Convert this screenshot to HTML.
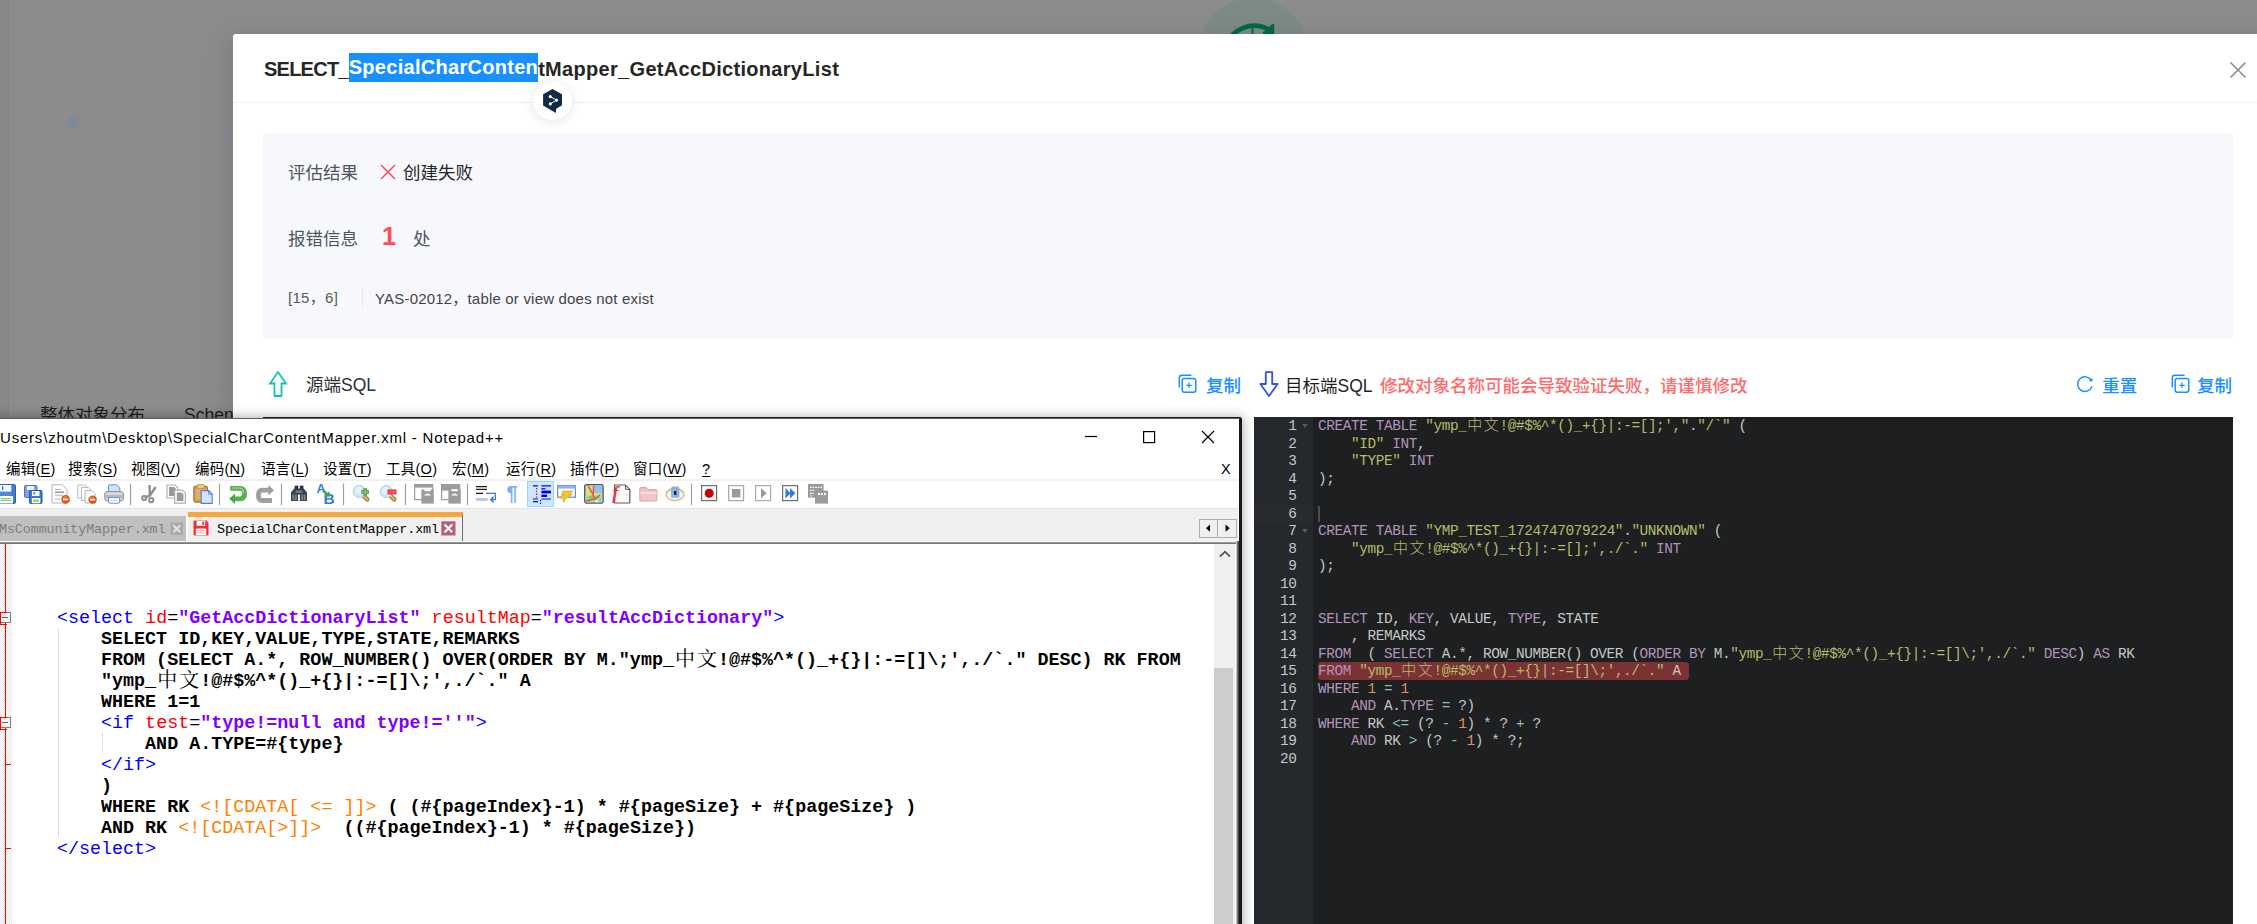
<!DOCTYPE html>
<html lang="zh-CN">
<head>
<meta charset="utf-8">
<title>SELECT_SpecialCharContentMapper_GetAccDictionaryList</title>
<style>
*{box-sizing:border-box;margin:0;padding:0}
html,body{width:2257px;height:924px;overflow:hidden}
body{background:#8c8c8c;font-family:"Liberation Sans","Noto Sans CJK SC",sans-serif;color:#262626;position:relative}
.abs{position:absolute}
.t{position:absolute;white-space:nowrap;line-height:1}
/* ---------- dimmed page behind ---------- */
#bgstrip{left:0;top:0;width:9.4px;height:418px;background:#86888a;border-right:1px solid #808284}
#bgbox{left:39px;top:-2px;width:300px;height:388px;border:1px solid #848a90;border-right:0}
.dot{position:absolute;border-radius:50%}
#gcircle{left:1198.5px;top:-1.7px;width:108.6px;height:108.6px;border-radius:50%;background:#7c8b84}
#bgtxt1{left:40px;top:406.5px;font-size:17.5px;color:#1c1c1c}
#bgtxt2{left:184px;top:406.5px;font-size:17.5px;color:#1c1c1c}
/* ---------- modal ---------- */
#modal{left:233px;top:34px;width:2030px;height:900px;background:#fff;border-radius:2.5px 0 0 0;box-shadow:0 4px 8px -5px rgba(0,0,0,.12),0 7.5px 20px 0 rgba(0,0,0,.08),0 11px 35px 10px rgba(0,0,0,.05)}
#hline{left:233px;top:102px;width:2030px;height:1px;background:#f0f0f0}
#title{left:264px;top:58.5px;font-size:20px;font-weight:bold;color:#262626;letter-spacing:.31px}
#title .a{letter-spacing:-.76px}
#title .sel{background:#1890ff;color:#fff;display:inline-block;height:29px;line-height:29px;vertical-align:top;margin-top:-5.5px;letter-spacing:.29px}
#panel{left:263px;top:133px;width:1970px;height:206px;background:#f7f8fc}
.lab{font-size:17.5px;color:#4e5561}
.dark{color:#262626}
</style>
</head>
<body>
<!-- dimmed page -->
<div class="abs" id="bgstrip"></div>
<div class="abs" id="bgbox"></div>
<div class="dot" style="left:139.8px;top:57.5px;width:6.5px;height:6.5px;background:#9a8486"></div>
<div class="dot" style="left:67.3px;top:116.3px;width:11.4px;height:11.4px;background:#808998"></div>
<div class="dot" style="left:221px;top:131.3px;width:8px;height:8px;background:#848d9c"></div>
<div class="abs" id="gcircle"></div>
<svg class="abs" style="left:1225px;top:18px" width="56" height="18" viewBox="0 0 56 18"><path d="M7 17 Q27 0 48 14" fill="none" stroke="#00694a" stroke-width="4.5"/><path d="M48 7 L48 16 L39 15 Z" fill="#00694a" stroke="#00694a" stroke-width="2.5" stroke-linejoin="round"/><path d="M27.5 9 V18" stroke="#00694a" stroke-width="2"/></svg>
<div class="t" id="bgtxt1">整体对象分布</div>
<div class="t" id="bgtxt2">Schen</div>

<!-- modal -->
<div class="abs" id="modal"></div>
<div class="abs" id="hline"></div>
<div class="t" id="title"><span class="a">SELECT_</span><span class="sel">SpecialCharConten</span>tMapper_GetAccDictionaryList</div>
<svg class="abs" style="left:2229px;top:61px" width="18" height="18" viewBox="0 0 18 18"><path d="M1.5 1.5 L16.5 16.5 M16.5 1.5 L1.5 16.5" stroke="#8c8c8c" stroke-width="1.6" fill="none"/></svg>

<!-- floating bubble -->
<div class="abs" style="left:533px;top:82px;width:39px;height:38px;border-radius:50%;background:#fff;box-shadow:0 2px 12px rgba(0,0,0,.11)"></div>
<svg class="abs" style="left:542px;top:88px" width="21" height="26" viewBox="0 0 21 26"><path d="M10.5 1 L20 6.2 V17.3 L14.2 20.8 L13.8 24.9 L1.1 17.4 V6.2 Z" fill="#0f2b46"/><path d="M8.3 8.6 L14.5 12.1 L8.3 15.9" fill="none" stroke="#fff" stroke-width="1"/><circle cx="8.3" cy="8.6" r="1.55" fill="#fff"/><circle cx="14.5" cy="12.1" r="1.55" fill="#fff"/><circle cx="8.3" cy="15.9" r="1.55" fill="#fff"/></svg>

<!-- info panel -->
<div class="abs" id="panel"></div>
<div class="t lab" style="left:288px;top:165px">评估结果</div>
<svg class="abs" style="left:380px;top:163.5px" width="16" height="16" viewBox="0 0 16 16"><path d="M1 1 L15 15 M15 1 L1 15" stroke="#ff4d4f" stroke-width="1.5" fill="none"/></svg>
<div class="t dark" style="left:403px;top:165px;font-size:17.5px">创建失败</div>
<div class="t lab" style="left:288px;top:231px">报错信息</div>
<div class="t" style="left:382px;top:224px;font-size:25px;font-weight:bold;color:#ff4d4f">1</div>
<div class="t lab" style="left:413px;top:231px">处</div>
<div class="t" style="left:288px;top:290px;font-size:15px;color:#595959;letter-spacing:.3px">[15，6]</div>
<div class="abs" style="left:362px;top:287px;width:1px;height:20px;background:#e8e8e8"></div>
<div class="t" style="left:375px;top:291px;font-size:15px;color:#434343;letter-spacing:.19px">YAS-02012，table or view does not exist</div>

<!-- SQL header row -->
<svg class="abs" style="left:268px;top:370px" width="20" height="28" viewBox="0 0 20 28"><path d="M10 2 L18 13.5 H13.5 V26 H6.5 V13.5 H2 Z" fill="none" stroke="#13c2c2" stroke-width="1.8" stroke-linejoin="miter"/></svg>
<div class="t dark" style="left:306px;top:377px;font-size:17.5px;color:#2b2f36">源端SQL</div>

<svg class="abs cp" style="left:1178px;top:374px" width="20" height="20" viewBox="0 0 20 20"><rect x="4.2" y="4.4" width="13.6" height="13.8" rx="2.2" fill="none" stroke="#1890ff" stroke-width="1.5"/><path d="M1.3 13.5 V3.8 Q1.3 1.3 3.8 1.3 H13.5" fill="none" stroke="#1890ff" stroke-width="1.5"/><path d="M11 8.6 V14 M8.3 11.3 H13.7" stroke="#1890ff" stroke-width="1.3"/></svg>
<div class="t" style="left:1206px;top:377.6px;font-size:17.5px;color:#1890ff;font-weight:500">复制</div>
<svg class="abs" style="left:1258px;top:371px" width="22" height="27" viewBox="0 0 22 27"><path d="M7.8 1.2 H14.2 V13 H19.6 L11 25 L2.4 13 H7.8 Z" fill="none" stroke="#2f54eb" stroke-width="1.8" stroke-linejoin="round"/></svg>
<div class="t" style="left:1285px;top:377.6px;font-size:17.5px;color:#1f1f1f">目标端SQL</div>
<div class="t" style="left:1380px;top:377.6px;font-size:17.5px;color:#ff6b6b;font-weight:500">修改对象名称可能会导致验证失败，请谨慎修改</div>

<svg class="abs" style="left:2076px;top:375px" width="18" height="18" viewBox="0 0 18 18"><path d="M15.2 5.2 A7.3 7.3 0 1 0 16 11.3" fill="none" stroke="#1890ff" stroke-width="1.4"/><path d="M16.6 3 L16.2 7 L12.6 5.6 Z" fill="#1890ff"/></svg>
<div class="t" style="left:2102.3px;top:377.7px;font-size:17.5px;color:#1890ff;font-weight:500">重置</div>
<svg class="abs cp" style="left:2170.5px;top:374.3px" width="20" height="20" viewBox="0 0 20 20"><rect x="4.2" y="4.4" width="13.6" height="13.8" rx="2.2" fill="none" stroke="#1890ff" stroke-width="1.5"/><path d="M1.3 13.5 V3.8 Q1.3 1.3 3.8 1.3 H13.5" fill="none" stroke="#1890ff" stroke-width="1.5"/><path d="M11 8.6 V14 M8.3 11.3 H13.7" stroke="#1890ff" stroke-width="1.3"/></svg>
<div class="t" style="left:2197px;top:377.7px;font-size:17.5px;color:#1890ff;font-weight:500">复制</div>

<!--NPP-START-->
<!-- ============ Notepad++ window ============ -->
<style>
#nppshadow{left:-20px;top:418px;width:1262px;height:520px;box-shadow:0 0 11px 1px rgba(0,0,0,.32)}
#srcedge{left:263px;top:416.5px;width:978px;height:3px;background:#1d1f21}
#npp{left:-1px;top:417.5px;width:1243px;height:520px;background:#fff;border-top:1.2px solid #5c5c5c;border-right:3.5px solid #19191a;overflow:hidden}
#npp .t{color:#000}
#npptitle{left:0;top:430px;font-size:15px;color:#000;letter-spacing:.8px}
.menu{font-size:14.5px;top:461.5px;color:#000;letter-spacing:.25px}
.menu u{text-decoration-thickness:1px;text-underline-offset:2px}
#menuline{left:0;top:479px;width:1238px;height:1.5px;background:#f0f0f0}
#tbline{left:0;top:508px;width:1238px;height:1px;background:#e3e3e3}
#tabbar{left:0;top:509px;width:1238px;height:32px;background:#f0f0f0}
#tabbot{left:0;top:541px;width:1238px;height:3px;background:linear-gradient(#fbfbfb 0,#f4f4f4 28%,#a6a6a6 36%,#8a8a8a 60%,#6a6a6a)}
#tab1{left:0;top:516px;width:186px;height:25px;background:#c0c0c0}
#tabgap{left:186px;top:516px;width:1.5px;height:25px;background:#fafafa}
#tab2{left:187.5px;top:511.7px;width:275px;height:29.5px;background:#f0f0f0;border-right:1.4px solid #6d6d6d;border-top:5px solid #faa73c}
.tabtxt{font-family:"Liberation Mono","Noto Sans CJK SC",monospace;font-size:13.4px;letter-spacing:-.11px;top:523px}
.sep{position:absolute;top:483px;width:1px;height:23px;background:#a0a0a0}
.ic{position:absolute;top:484px;width:20px;height:20px;overflow:visible}
#edge-r{left:1236px;top:541px;width:3px;height:400px;background:linear-gradient(to right,#e8e8e8,#8a8a8a 40%,#2a2a2a)}
#vsb{left:1214px;top:544px;width:21px;height:400px;background:#f0f0f0}
#vthumb{left:1214px;top:668px;width:19px;height:300px;background:#cdcdcd}
#foldm{left:0;top:544px;width:12px;height:400px;background:#f4f4f4;background-image:repeating-conic-gradient(#fff 0 25%,#e6e6e6 0 50%);background-size:2px 2px}
#redline{left:5px;top:544px;width:1px;height:400px;background:#ff0000}
.fbox{position:absolute;left:0;width:11.3px;height:11px;background:#f6f6f6;border:1.3px solid #808080}
.fbox::before{content:"";position:absolute;left:-1.3px;top:-1.3px;width:6px;height:11px;border:1.3px solid #f00;border-right:0}
.fbox i{position:absolute;left:1.4px;top:3.5px;width:6px;height:1.4px;background:#606060}
.ftick{position:absolute;left:5px;width:6px;height:1px;background:#f00}
.code{font-family:"Liberation Mono","Noto Serif CJK SC",monospace;font-size:18.36px;font-weight:bold;color:#000;white-space:pre;position:absolute;left:12.9px;line-height:21px;height:21px}
.code b{font-weight:normal;color:#0000ff}
.code em{font-style:normal;font-weight:normal;color:#ff0000}
.code i{font-style:normal;font-weight:normal;color:#000}
.code s{text-decoration:none;color:#8000ff}
.code q{quotes:none;font-weight:normal;color:#ff8000}
.code .cj{display:inline-block;width:22px;text-align:center;font-weight:normal;font-size:20px;line-height:21px;vertical-align:top}
.guide{position:absolute;width:1px;background-image:linear-gradient(#c0c0c0 50%,transparent 50%);background-size:1px 2px}
</style>
<div class="abs" id="nppshadow"></div>
<div class="abs" id="srcedge"></div>
<div class="abs" id="npp"></div>
<div class="t" id="npptitle">Users\zhoutm\Desktop\SpecialCharContentMapper.xml - Notepad++</div>
<svg class="abs" style="left:1080px;top:426px" width="140" height="22" viewBox="0 0 140 22"><path d="M5 10.5 H17" stroke="#000" stroke-width="1.2"/><rect x="63.6" y="5.6" width="11" height="11" fill="none" stroke="#000" stroke-width="1.2"/><path d="M122 5 L134 17 M134 5 L122 17" stroke="#000" stroke-width="1.2"/></svg>

<!-- menu -->
<div class="t menu" style="left:6px">编辑(<u>E</u>)</div>
<div class="t menu" style="left:68px">搜索(<u>S</u>)</div>
<div class="t menu" style="left:131px">视图(<u>V</u>)</div>
<div class="t menu" style="left:195px">编码(<u>N</u>)</div>
<div class="t menu" style="left:261px">语言(<u>L</u>)</div>
<div class="t menu" style="left:323px">设置(<u>T</u>)</div>
<div class="t menu" style="left:386px">工具(<u>O</u>)</div>
<div class="t menu" style="left:452px">宏(<u>M</u>)</div>
<div class="t menu" style="left:506px">运行(<u>R</u>)</div>
<div class="t menu" style="left:570px">插件(<u>P</u>)</div>
<div class="t menu" style="left:633px">窗口(<u>W</u>)</div>
<div class="t menu" style="left:702px"><u>?</u></div>
<div class="t menu" style="left:1221px">X</div>
<div class="abs" id="menuline"></div>
<!-- toolbar icons -->
<div class="abs" style="left:527px;top:481px;width:27px;height:26px;background:#cce8ff;border:1px solid #99d1ff"></div>
<svg class="abs" style="left:0;top:480px" width="840" height="28" viewBox="0 0 840 28">
<g stroke="#a0a0a0" stroke-width="1.2"><path d="M130.5 3.5 V25 M219.5 3.5 V25 M281.5 3.5 V25 M343.5 3.5 V25 M405.5 3.5 V25 M467.5 3.5 V25 M691.5 3.5 V25"/></g>
<!-- save -->
<g transform="translate(-4,4)"><rect x=".5" y=".5" width="19" height="19" rx="1.5" fill="#4f86d9" stroke="#2e5cb0"/><rect x="3.5" y="1" width="12" height="6.6" fill="#f4f8ff"/><rect x="15.5" y="1" width="3" height="18" fill="#3f6fc4" opacity=".55"/><rect x="6" y="2.3" width="1.3" height="3.5" fill="#2e5cb0"/><rect x="3" y="12" width="14" height="7.5" fill="#fff"/><rect x="5" y="14" width="10" height="1.2" fill="#8fcf5b"/><rect x="5" y="15.8" width="10" height="1.2" fill="#8fcf5b"/></g>
<!-- save all -->
<g transform="translate(24,4)"><rect x=".5" y="1.5" width="12.5" height="12" rx="1" fill="#7ea3de" stroke="#4a72c0"/><rect x="3" y="2" width="7" height="4" fill="#eef3fc"/><rect x="5.5" y="6.5" width="12.5" height="13" rx="1" fill="#3f74cf" stroke="#2b55ab"/><rect x="8" y="7" width="7.5" height="5" fill="#f4f8ff"/><rect x="9.6" y="8" width="1.1" height="2.6" fill="#2b55ab"/><rect x="7.8" y="14" width="8.5" height="5.3" fill="#fff"/><rect x="9" y="15.6" width="6" height="2.2" fill="#8fcf5b"/></g>
<!-- close -->
<g transform="translate(51,4)"><path d="M1 .8 H11.5 L16 5.4 V19 H1 Z" fill="#fff" stroke="#b4b4b4"/><path d="M4 5.4 H10 M4 11.2 H12 M4 15.2 H9" stroke="#b0b0b0" stroke-width="1"/><path d="M4 8.2 H13" stroke="#a0a0a0" stroke-width="1.7"/><circle cx="14.6" cy="15.4" r="4.3" fill="#dd560f"/><circle cx="14.2" cy="14.6" r="2.5" fill="#f28a4a" opacity=".7"/><rect x="12" y="14.7" width="5.2" height="1.5" fill="#fff"/></g>
<!-- close all -->
<g transform="translate(77,4)"><path d="M.8 1 H8 L11 4 V14 H.8 Z" fill="#fff" stroke="#bdbdbd"/><path d="M4.5 3.5 H11.5 L14.5 6.5 V16.5 H4.5 Z" fill="#fff" stroke="#b9b9b9"/><path d="M8 6.5 H15 L18 9.5 V19 H8 Z" fill="#fff" stroke="#b4b4b4"/><circle cx="15.6" cy="15.6" r="4.2" fill="#dd560f"/><circle cx="15.2" cy="14.8" r="2.4" fill="#f28a4a" opacity=".7"/><rect x="13" y="14.9" width="5.2" height="1.5" fill="#fff"/></g>
<!-- print -->
<g transform="translate(104,4)"><path d="M4.5 8 V1.5 Q4.5 .8 5.3 .8 H12.5 L15.8 4 V8 Z" fill="#cfe3fb" stroke="#5e92d8"/><rect x=".8" y="7.6" width="18.6" height="9.4" rx="2.4" fill="#d9d9d9" stroke="#8c8c8c"/><rect x="1.6" y="11" width="17" height="3" fill="#b7b7b7"/><path d="M4.6 13.6 H15.6 V18.4 Q15.6 19.2 14.8 19.2 H5.4 Q4.6 19.2 4.6 18.4 Z" fill="#fdfdfd" stroke="#5e92d8"/><path d="M6.5 16.4 H13.6" stroke="#b9d3f3"/></g>
<!-- cut -->
<g transform="translate(141,4)" fill="none" stroke="#8f8f8f"><path d="M8.6 1 L8.8 11.4 M14.6 3 L8.8 11.8" stroke-width="2.4"/><path d="M8.8 11.6 L3.5 13.6" stroke-width="2.6"/><circle cx="3.2" cy="14" r="2.1" stroke-width="2"/><circle cx="10.2" cy="16.2" r="2.1" stroke-width="2"/></g>
<!-- copy -->
<g transform="translate(166,4)"><path d="M1 1 H9 L12 4 V14 H1 Z" fill="#fff" stroke="#b0b0b0" stroke-width="1.2"/><path d="M3 3 H8 L10 5 V12 H3 Z" fill="#9a9a9a"/><path d="M8.6 6.2 H16.4 L19.4 9.2 V19.2 H8.6 Z" fill="#fff" stroke="#b0b0b0" stroke-width="1.2"/><path d="M10.8 8.5 H15.6 L17.4 10.3 V17 H10.8 Z" fill="#9a9a9a"/></g>
<!-- paste -->
<g transform="translate(193,4)"><rect x=".8" y="2.2" width="13.8" height="16" rx="1.4" fill="#cf9b57" stroke="#a06a28"/><rect x="2.4" y="4.6" width="10.6" height="11" fill="#dcae70"/><rect x="4.2" y=".6" width="7" height="3.8" rx=".8" fill="#f1cf7d" stroke="#b98a3a" stroke-width=".8"/><path d="M8.2 6.6 H15.8 L19.2 10 V19.4 H8.2 Z" fill="#d5e5fb" stroke="#4e82d6" stroke-width="1.1"/><path d="M15.6 6.8 V10.2 H19" fill="none" stroke="#4e82d6" stroke-width=".9"/></g>
<!-- undo -->
<g transform="translate(229,4)"><path d="M1.2 4.4 H11 Q15.6 4.4 15.6 9.6 Q15.6 14.8 11 14.8 H5" fill="none" stroke="#55b052" stroke-width="4.8"/><path d="M6 9.6 L.2 14.8 L6 20 Z" fill="#4aa647"/><path d="M3 4 H11 Q14.4 4.4 14.6 9" fill="none" stroke="#a6dba2" stroke-width="1.2"/></g>
<!-- redo -->
<g transform="translate(256,4)"><path d="M16 16.5 H6.4 Q2.4 16.5 2.4 11.4 Q2.4 6.2 6.4 6.2 H13" fill="none" stroke="#9f9f9f" stroke-width="4.8"/><path d="M12.4 .8 L18 6.2 L12.4 11.6 Z" fill="#9f9f9f"/></g>
<!-- find (binoculars) -->
<g transform="translate(291,4)"><rect x="3.6" y="1.6" width="3.6" height="4" fill="#2f353d"/><rect x="8.8" y="1.6" width="3.6" height="4" fill="#2f353d"/><path d="M3.2 4.6 H12.8 L16 8.6 V17 H8.9 V10.6 H7.1 V17 H0 V8.6 Z" fill="#3a4048"/><rect x="4.6" y="6.4" width="6.8" height="2.6" fill="#6f7985"/><rect x="1.4" y="10.6" width="4.4" height="5.6" fill="#7b8591"/><rect x="10.2" y="10.6" width="4.4" height="5.6" fill="#7b8591"/><path d="M3.6 10.6 V16.2 M12.4 10.6 V16.2" stroke="#4a525c" stroke-width="1"/></g>
<!-- replace -->
<g transform="translate(317,4)" font-family="Liberation Sans,sans-serif" font-weight="bold" fill="#2f7be0"><text x="-.4" y="9" font-size="12.5">A</text><text x="6.6" y="20" font-size="15.5">B</text><path d="M6.4 6.6 L10.6 10.6" stroke="#3da35a" stroke-width="2.6"/><path d="M7 12.6 L12.8 12.8 L12.4 7 Z" fill="#3da35a"/></g>
<!-- zoom in -->
<g transform="translate(353,4)"><path d="M11.2 12.6 L14.2 15.4" stroke="#a87538" stroke-width="4.6" stroke-linecap="round"/><path d="M11.2 12.6 L14.2 15.4" stroke="#d9ad78" stroke-width="2.6" stroke-linecap="round"/><circle cx="6.3" cy="7.5" r="6.1" fill="#d3e3f8" stroke="#b4cdee" stroke-width="1"/><circle cx="5.6" cy="6.6" r="3.6" fill="#e6effc"/><path d="M12.1 4.2 V11.6 M8.3 7.9 H15.9" stroke="#4b9a3f" stroke-width="3.8"/><path d="M12.1 5 V10.8 M9.1 7.9 H15.1" stroke="#7dbb6c" stroke-width="2"/></g>
<!-- zoom out -->
<g transform="translate(380,4)"><path d="M11.2 12.6 L14.2 15.4" stroke="#a87538" stroke-width="4.6" stroke-linecap="round"/><path d="M11.2 12.6 L14.2 15.4" stroke="#d9ad78" stroke-width="2.6" stroke-linecap="round"/><circle cx="6.3" cy="7.5" r="6.1" fill="#d3e3f8" stroke="#b4cdee" stroke-width="1"/><circle cx="5.6" cy="6.6" r="3.6" fill="#e6effc"/><rect x="8" y="6" width="8" height="4" fill="#f25a5a" stroke="#e02626" stroke-width=".9"/></g>
<!-- sync v -->
<g transform="translate(414,4)"><rect x=".6" y=".6" width="18" height="15" fill="#fff" stroke="#9c9c9c" stroke-width="1.2"/><rect x=".6" y=".6" width="18" height="3" fill="#9c9c9c"/><rect x="7.4" y="5.4" width="12.4" height="14.2" fill="#9c9c9c"/><rect x="10.4" y="5.2" width="6.4" height="2" fill="#fff"/><path d="M10 11.4 Q13.6 7.6 17.2 11.4 Z" fill="#fff"/></g>
<!-- sync h -->
<g transform="translate(441,4)"><rect x=".6" y=".6" width="18" height="15" fill="#fff" stroke="#9c9c9c" stroke-width="1.2"/><rect x=".6" y=".6" width="18" height="6" fill="#9c9c9c"/><rect x="7.4" y="5.4" width="12.4" height="14.2" fill="#9c9c9c"/><rect x="10.4" y="5.2" width="6.4" height="2" fill="#fff"/><path d="M10 11.4 Q13.6 7.6 17.2 11.4 Z" fill="#fff"/></g>
<!-- wrap -->
<g transform="translate(476,4)"><path d="M0 2.6 H11 M0 5.4 H11" stroke="#1a1a1a" stroke-width="1.3"/><path d="M0 9.4 H7" stroke="#1a1a1a" stroke-width="1.3"/><path d="M10 9.4 H19.4 V15.6 H16" fill="none" stroke="#3f79cc" stroke-width="1.2"/><path d="M17.6 12.8 L14.6 15.6 L17.6 18.4 M16.6 14 V18" fill="none" stroke="#3f79cc" stroke-width="1.3"/><rect x="0" y="14" width="11.6" height="2.8" fill="#a9c8f2"/></g>
<!-- pilcrow -->
<g transform="translate(507,4)"><text x="-.6" y="16.4" font-family="Liberation Sans,sans-serif" font-weight="bold" font-size="20" fill="#7fb0ee">¶</text></g>
<!-- indent guide -->
<g transform="translate(533,4)"><path d="M0 1.8 H5 M8.4 1.8 H18" stroke="#0000ee" stroke-width="1.2"/><path d="M8.4 4.8 H12.4" stroke="#0000ee" stroke-width="1.3"/><rect x="8.4" y="6.6" width="9.6" height="2.8" fill="#0000ee"/><rect x="8.4" y="10.6" width="5.6" height="2.4" fill="#0000ee"/><path d="M0 15 H5 M8.4 15 H18 M0 17.6 H5" stroke="#0000ee" stroke-width="1.2"/><path d="M3.6 4 V13.4" stroke="#ee0000" stroke-width="1.3" stroke-dasharray="1.3 1.5"/><path d="M7.6 16 V20.6" stroke="#0000ee" stroke-width="1.1" stroke-dasharray="1.2 1.6"/></g>
<!-- UDL -->
<g transform="translate(557,4)"><rect x=".6" y="1.6" width="17.8" height="11.6" fill="#fff" stroke="#5d8fdb" stroke-width="1.2"/><rect x=".6" y="1.6" width="17.8" height="3" fill="#8db4ea"/><path d="M6 7 H16 L12.6 10.4 H15.4 L8 15.2 L6.6 18.6 L6.4 15 L1.6 13.6 L7.6 11.2 H4.4 Z" fill="#efc53a" stroke="#d9a520" stroke-width=".7"/></g>
<!-- doc map -->
<g transform="translate(584,4)"><rect x=".7" y=".7" width="18.4" height="18.4" rx="1.6" fill="#d6e477" stroke="#46518a" stroke-width="1.3"/><rect x="10" y="1.6" width="8" height="7.6" fill="#8ec3ea"/><rect x="1.6" y="11.6" width="16.6" height="6.6" fill="#9fd795"/><circle cx="7.4" cy="13.8" r="2.4" fill="#7cc66f"/><path d="M4 1.6 L11.4 14.8 M9.6 2 L9.2 9.6 M2 17 L8 15.6 L11.4 14.8 L16 11" fill="none" stroke="#ee4a5a" stroke-width="1.4"/><rect x="11.6" y="16.6" width="2.6" height="1.6" fill="#fff"/></g>
<!-- function list -->
<g transform="translate(611,4)"><path d="M3.6 1 H14.4 L18.8 5.4 V19 H3.6 Z" fill="#fffdf6" stroke="#5a5a5a" stroke-width="1.2"/><path d="M14.4 1 V5.4 H18.8" fill="none" stroke="#5a5a5a" stroke-width="1"/><text x="1.2" y="15" font-family="Liberation Serif,serif" font-style="italic" font-weight="bold" font-size="18.5" fill="#e23a44">f</text><path d="M15.6 10 V17" stroke="#d6e6d0" stroke-width="1.2" stroke-dasharray="1.4 2"/></g>
<!-- folder -->
<g transform="translate(639,4)"><path d="M.8 5 Q.8 3.6 2.2 3.6 H7 L8.4 5.6 H16.6 Q17.8 5.6 17.8 6.8 V15.8 Q17.8 17 16.6 17 H2 Q.8 17 .8 15.8 Z" fill="#f3c5c8" stroke="#e6a3a8" stroke-width="1.1"/><path d="M1 9 H17.6" stroke="#f9e2e3" stroke-width="1.6"/></g>
<!-- eye -->
<g transform="translate(665,4)"><ellipse cx="10" cy="10.4" rx="9" ry="6.2" fill="#f3f6f2" stroke="#e9b07a" stroke-width="1.4"/><path d="M1.4 9 Q10 2 18.6 9" fill="none" stroke="#b9d7b0" stroke-width="1.2"/><rect x="6" y="4.2" width="8.4" height="9.6" rx="1" fill="#88b4ea"/><rect x="6.6" y="2.6" width="7.2" height="2.4" fill="#a8a8a8"/><rect x="9" y="7" width="2.4" height="3.8" fill="#17202c"/></g>
<!-- macro record -->
<g transform="translate(701,5)"><rect x=".6" y=".6" width="15" height="15" fill="#fff" stroke="#6e6e6e" stroke-width="1.2"/><circle cx="8.2" cy="8.2" r="4.5" fill="#cc0000"/></g>
<g transform="translate(728,5)"><rect x=".6" y=".6" width="15" height="15" fill="#fff" stroke="#a9a9a9" stroke-width="1.2"/><rect x="4" y="4" width="8.4" height="8.4" fill="#9a9a9a"/></g>
<g transform="translate(755,5)"><rect x=".6" y=".6" width="15" height="15" fill="#fff" stroke="#a9a9a9" stroke-width="1.2"/><path d="M6 3 L11.6 8.2 L6 13.4 Z" fill="#9a9a9a"/></g>
<g transform="translate(782,5)"><rect x=".6" y=".6" width="15" height="15" fill="#fff" stroke="#6e6e6e" stroke-width="1.2"/><path d="M3.4 3 L8.8 8.2 L3.4 13.4 Z M8 3 L13.4 8.2 L8 13.4 Z" fill="#3b78d8"/></g>
<g transform="translate(808,4)"><rect x="0" y="0" width="15.6" height="13.6" fill="#9a9a9a"/><rect x="7" y="6.6" width="13" height="13" fill="#9a9a9a"/><path d="M2 3.4 H14 M2 6.4 H6 M2 9.4 H6 M2 12 H5" stroke="#fff" stroke-width="1.2" stroke-dasharray="1.6 1"/><path d="M10 10 H18" stroke="#fff" stroke-width="2.2" stroke-dasharray="2 1"/></g>
</svg>

<div class="abs" id="tbline"></div>
<div class="abs" id="tabbar"></div>
<div class="abs" id="tab1"></div>
<div class="abs" id="tabgap"></div>
<div class="abs" id="tab2"></div>
<div class="t tabtxt" style="left:-1px;color:#7c7c7c">MsCommunityMapper.xml</div>
<svg class="abs" style="left:169.5px;top:521.5px" width="13.5" height="13.5" viewBox="0 0 15 15"><rect x=".5" y=".5" width="14" height="14" fill="#a9a9a9"/><path d="M3.6 3.6 L11.4 11.4 M11.4 3.6 L3.6 11.4" stroke="#e4e4e4" stroke-width="2"/></svg>
<svg class="abs" style="left:192px;top:519px" width="18" height="18" viewBox="0 0 18 18"><path d="M1.5 2.5 Q1.5 1.5 2.5 1.5 H14.3 L16.5 3.7 V15.5 Q16.5 16.5 15.5 16.5 H2.5 Q1.5 16.5 1.5 15.5 Z" fill="#ee2f36"/><rect x="4.6" y="1.8" width="8.6" height="5" fill="#fff"/><rect x="10.2" y="2.6" width="1.9" height="3.3" fill="#ee2f36"/><rect x="3.8" y="9.6" width="10.4" height="6.6" fill="#fff"/><path d="M5 11.6 H13 M5 13.8 H13" stroke="#f3a0a3" stroke-width="1"/></svg>
<div class="t tabtxt" style="left:217px;color:#000">SpecialCharContentMapper.xml</div>
<svg class="abs" style="left:441px;top:521px" width="15" height="15" viewBox="0 0 15 15"><rect x=".3" y=".3" width="14.2" height="14.2" fill="#b55f7c"/><path d="M3.6 3.6 L11.2 11.2 M11.2 3.6 L3.6 11.2" stroke="#fff" stroke-width="2.1"/></svg>
<!-- tab scroll buttons -->
<div class="abs" style="left:1199px;top:519px;width:19px;height:18.5px;background:#f0f0f0;border:1px solid #adadad"></div>
<div class="abs" style="left:1217px;top:519px;width:19.5px;height:18.5px;background:#f0f0f0;border:1px solid #adadad"></div>
<svg class="abs" style="left:1199px;top:519px" width="38" height="19" viewBox="0 0 38 19"><path d="M11 5.6 V12.8 L7 9.2 Z M26.6 5.6 V12.8 L30.8 9.2 Z" fill="#000"/></svg>
<div class="abs" id="tabbot"></div>

<!-- editor -->
<div class="abs" id="foldm"></div>
<div class="abs" id="redline"></div>
<div class="fbox" style="top:612px"><i></i></div>
<div class="fbox" style="top:717px"><i></i></div>
<div class="ftick" style="top:764px"></div>
<div class="ftick" style="top:848px"></div>
<div class="abs" id="vsb"></div>
<div class="abs" id="vthumb"></div>
<svg class="abs" style="left:1217px;top:548px" width="16" height="12" viewBox="0 0 16 12"><path d="M3 8.6 L8 3.6 L13 8.6" fill="none" stroke="#505050" stroke-width="1.7"/></svg>
<div class="abs" id="edge-r"></div>
<div class="guide" style="left:58px;top:628px;height:210px"></div>
<div class="guide" style="left:102px;top:733px;height:21px"></div>

<div class="code" style="top:607.5px">    <b>&lt;select </b><em>id</em><i>=</i><s>"GetAccDictionaryList"</s> <em>resultMap</em><i>=</i><s>"resultAccDictionary"</s><b>&gt;</b></div>
<div class="code" style="top:628.5px">        SELECT ID,KEY,VALUE,TYPE,STATE,REMARKS</div>
<div class="code" style="top:649.5px">        FROM (SELECT A.*, ROW_NUMBER() OVER(ORDER BY M."ymp_<span class="cj">中</span><span class="cj">文</span>!@#$%^*()_+{}|:-=[]\;',./`." DESC) RK FROM</div>
<div class="code" style="top:670.5px">        "ymp_<span class="cj">中</span><span class="cj">文</span>!@#$%^*()_+{}|:-=[]\;',./`." A</div>
<div class="code" style="top:691.5px">        WHERE 1=1</div>
<div class="code" style="top:712.5px">        <b>&lt;if </b><em>test</em><i>=</i><s>"type!=null and type!=''"</s><b>&gt;</b></div>
<div class="code" style="top:733.5px">            AND A.TYPE=#{type}</div>
<div class="code" style="top:754.5px">        <b>&lt;/if&gt;</b></div>
<div class="code" style="top:775.5px">        )</div>
<div class="code" style="top:796.5px">        WHERE RK <q>&lt;![CDATA[ &lt;= ]]&gt;</q> ( (#{pageIndex}-1) * #{pageSize} + #{pageSize} )</div>
<div class="code" style="top:817.5px">        AND RK <q>&lt;![CDATA[&gt;]]&gt;</q>  ((#{pageIndex}-1) * #{pageSize})</div>
<div class="code" style="top:838.5px">    <b>&lt;/select&gt;</b></div>
<!--NPP-END-->
<!--ACE-START-->
<!-- ============ Ace editor (target SQL) ============ -->
<style>
#ace{left:1254px;top:417px;width:979px;height:520px;background:#1d1f21;overflow:hidden}
#gut{left:1254px;top:417px;width:59px;height:520px;background:#25282c}
#gact{left:1254px;top:504.5px;width:59px;height:17.5px;background:#292b2f}
#lact{left:1313px;top:504.5px;width:920px;height:17.5px;background:#202225}
.al,.ln{position:absolute;font-family:"Liberation Mono","Noto Sans CJK SC",monospace;font-size:14.4px;letter-spacing:-.39px;line-height:17.5px;height:17.5px;white-space:pre;color:#c5c8c6}
.al{left:1318px}
.ln{left:1254px;width:42.6px;text-align:right}
.al .k{color:#b294bb}.al .s{color:#b5bd68}.al .n{color:#de935f}.al .o{color:#8abeb7}
.al .cj{display:inline-block;width:16.5px;text-align:center;letter-spacing:0;font-size:15px;font-weight:300;line-height:17.5px;vertical-align:top}
#errhl{left:1318px;top:662px;width:371px;height:18px;background:#7b3235;border-radius:3.5px}
.fw{position:absolute;left:1301.5px;width:0;height:0;border-left:3.6px solid transparent;border-right:3.6px solid transparent;border-top:4px solid #55595d}
</style>
<div class="abs" id="ace"></div>
<div class="abs" id="gut"></div>
<div class="abs" id="gact"></div>
<div class="abs" id="errhl"></div>
<div class="fw" style="top:423.5px"></div>
<div class="fw" style="top:528.5px"></div>
<div class="abs" style="left:1318px;top:505.5px;width:2px;height:16px;background:#4b4d4f"></div>
<div class="ln" style="top:418px">1</div>
<div class="al" style="top:418px"><span class="k">CREATE</span> <span class="k">TABLE</span> <span class="s">"ymp_<span class="cj">中</span><span class="cj">文</span>!@#$%^*()_+{}|:-=[];',"</span>.<span class="s">"/`"</span> (</div>
<div class="ln" style="top:435.5px">2</div>
<div class="al" style="top:435.5px">    <span class="s">"ID"</span> <span class="k">INT</span>,</div>
<div class="ln" style="top:453px">3</div>
<div class="al" style="top:453px">    <span class="s">"TYPE"</span> <span class="k">INT</span></div>
<div class="ln" style="top:470.5px">4</div>
<div class="al" style="top:470.5px">);</div>
<div class="ln" style="top:488px">5</div>
<div class="ln" style="top:505.5px">6</div>
<div class="ln" style="top:523px">7</div>
<div class="al" style="top:523px"><span class="k">CREATE</span> <span class="k">TABLE</span> <span class="s">"YMP_TEST_1724747079224"</span>.<span class="s">"UNKNOWN"</span> (</div>
<div class="ln" style="top:540.5px">8</div>
<div class="al" style="top:540.5px">    <span class="s">"ymp_<span class="cj">中</span><span class="cj">文</span>!@#$%^*()_+{}|:-=[];',./`."</span> <span class="k">INT</span></div>
<div class="ln" style="top:558px">9</div>
<div class="al" style="top:558px">);</div>
<div class="ln" style="top:575.5px">10</div>
<div class="ln" style="top:593px">11</div>
<div class="ln" style="top:610.5px">12</div>
<div class="al" style="top:610.5px"><span class="k">SELECT</span> ID, <span class="k">KEY</span>, VALUE, <span class="k">TYPE</span>, STATE</div>
<div class="ln" style="top:628px">13</div>
<div class="al" style="top:628px">    , REMARKS</div>
<div class="ln" style="top:645.5px">14</div>
<div class="al" style="top:645.5px"><span class="k">FROM</span>  ( <span class="k">SELECT</span> A.*, ROW_NUMBER() OVER (<span class="k">ORDER</span> <span class="k">BY</span> M.<span class="s">"ymp_<span class="cj">中</span><span class="cj">文</span>!@#$%^*()_+{}|:-=[]\;',./`."</span> <span class="k">DESC</span>) <span class="k">AS</span> RK</div>
<div class="ln" style="top:663px">15</div>
<div class="al" style="top:663px"><span class="k">FROM</span> <span class="s">"ymp_<span class="cj">中</span><span class="cj">文</span>!@#$%^*()_+{}|:-=[]\;',./`."</span> A</div>
<div class="ln" style="top:680.5px">16</div>
<div class="al" style="top:680.5px"><span class="k">WHERE</span> <span class="n">1</span> <span class="o">=</span> <span class="n">1</span></div>
<div class="ln" style="top:698px">17</div>
<div class="al" style="top:698px">    <span class="k">AND</span> A.<span class="k">TYPE</span> <span class="o">=</span> ?)</div>
<div class="ln" style="top:715.5px">18</div>
<div class="al" style="top:715.5px"><span class="k">WHERE</span> RK <span class="o">&lt;=</span> (? <span class="o">-</span> <span class="n">1</span>) * ? <span class="o">+</span> ?</div>
<div class="ln" style="top:733px">19</div>
<div class="al" style="top:733px">    <span class="k">AND</span> RK <span class="o">&gt;</span> (? <span class="o">-</span> <span class="n">1</span>) * ?;</div>
<div class="ln" style="top:750.5px">20</div>
<!--ACE-END-->
</body>
</html>
